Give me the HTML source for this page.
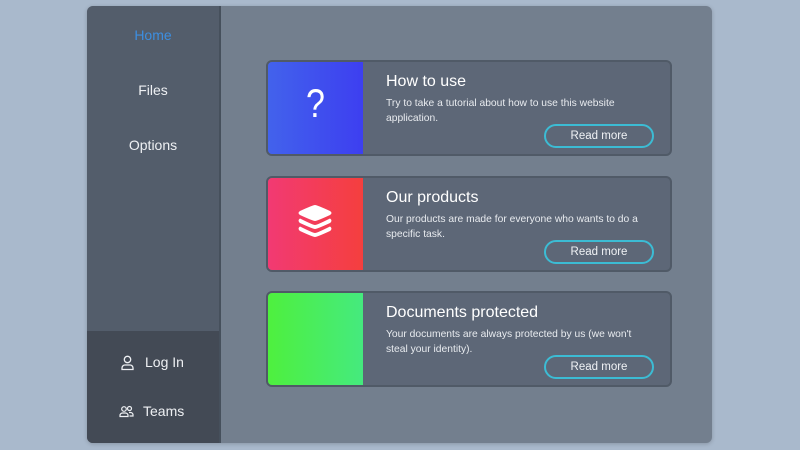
<!DOCTYPE html>
<html><head><style>
*{margin:0;padding:0;box-sizing:border-box}
body{width:800px;height:450px;background:#a9b9cc;font-family:"Liberation Sans",sans-serif;position:relative;overflow:hidden}
.wrap{position:absolute;left:87px;top:6px;width:625px;height:437px;border-radius:6px;overflow:hidden;background:#737f8e;box-shadow:0 1px 4px rgba(0,0,0,.2)}
.side{position:absolute;left:0;top:0;width:134px;height:437px;background:#535d6b;border-right:2px solid #46505c}
.side .bot{position:absolute;left:0;top:325px;width:132px;height:112px;background:#434a55}
.nav{position:absolute;left:0;width:132px;text-align:center;color:#eef0f3;font-size:14px}
.nl{position:absolute;color:#eef0f3;font-size:14px}
.card{position:absolute;left:179px;width:406px;height:96px;background:#5d6777;border:2px solid #505a67;border-radius:6px;overflow:hidden}
.col{position:absolute;left:0;top:0;width:95px;height:100%}
.t{position:absolute;left:118px;top:11px;color:#fff;font-size:16px}
.d{position:absolute;left:118px;top:34px;width:262px;color:#e8ebef;font-size:10.3px;line-height:15px}
.b{position:absolute;left:276px;top:62px;width:110px;height:24px;border:2px solid #3cbcd4;border-radius:12px;color:#f0f2f5;font-size:11.5px;text-align:center;line-height:20px}
</style></head><body>
<div class="wrap">
<div class="side">
<div class="nav" style="top:21px;color:#3d8ee0">Home</div>
<div class="nav" style="top:76px">Files</div>
<div class="nav" style="top:131px">Options</div>
<div class="bot">
<svg style="position:absolute;left:34px;top:24px" width="13" height="16" viewBox="0 0 13 16" fill="none" stroke="#eef0f3" stroke-width="1.3"><circle cx="6.5" cy="4.5" r="3.2"/><path d="M1 14.5v-1.5a3 3 0 0 1 3-3h5a3 3 0 0 1 3 3v1.5z"/></svg>
<div class="nl" style="top:23px;left:58px">Log In</div>
<svg style="position:absolute;left:32px;top:74px" width="15" height="13" viewBox="0 0 15 13" fill="none" stroke="#eef0f3" stroke-width="1.2"><circle cx="5" cy="4" r="2.3"/><circle cx="10.5" cy="3.5" r="2"/><path d="M1 11.5v-1a2.5 2.5 0 0 1 2.5-2.5h3a2.5 2.5 0 0 1 2.5 2.5v1z"/><path d="M10 7.5h1.5a2.5 2.5 0 0 1 2.5 2.5v1h-3.5"/></svg>
<div class="nl" style="top:72px;left:56px">Teams</div>
</div>
</div>
<div class="card" style="top:54px"><div class="col" style="background:linear-gradient(90deg,#4262ec,#3d3ff0)"><div style="position:absolute;width:95px;text-align:center;top:20px;color:#fff;font-size:40px;transform:scaleX(0.85)">?</div></div>
<div class="t">How to use</div><div class="d">Try to take a tutorial about how to use this website application.</div><div class="b">Read more</div></div>
<div class="card" style="top:170px"><div class="col" style="background:linear-gradient(90deg,#f23a73,#f43f3e)">
<svg style="position:absolute;left:28px;top:26px" width="38" height="36" viewBox="0 0 38 36" fill="#fff"><path d="M19 1 Q21 1 34 7 Q37 9 34 11 Q21 17 19 17 Q17 17 4 11 Q1 9 4 7 Q17 1 19 1Z"/><path d="M4 14.5 Q17 21 19 21 Q21 21 34 14.5 Q37 16.5 34 19 Q21 25 19 25 Q17 25 4 19 Q1 16.5 4 14.5Z"/><path d="M4 22.5 Q17 29 19 29 Q21 29 34 22.5 Q37 24.5 34 27 Q21 33 19 33 Q17 33 4 27 Q1 24.5 4 22.5Z"/></svg></div>
<div class="t">Our products</div><div class="d">Our products are made for everyone who wants to do a specific task.</div><div class="b">Read more</div></div>
<div class="card" style="top:285px"><div class="col" style="background:linear-gradient(90deg,#4ef03e,#45ea7e)"></div>
<div class="t">Documents protected</div><div class="d">Your documents are always protected by us (we won't steal your identity).</div><div class="b">Read more</div></div>
</div>
</body></html>
